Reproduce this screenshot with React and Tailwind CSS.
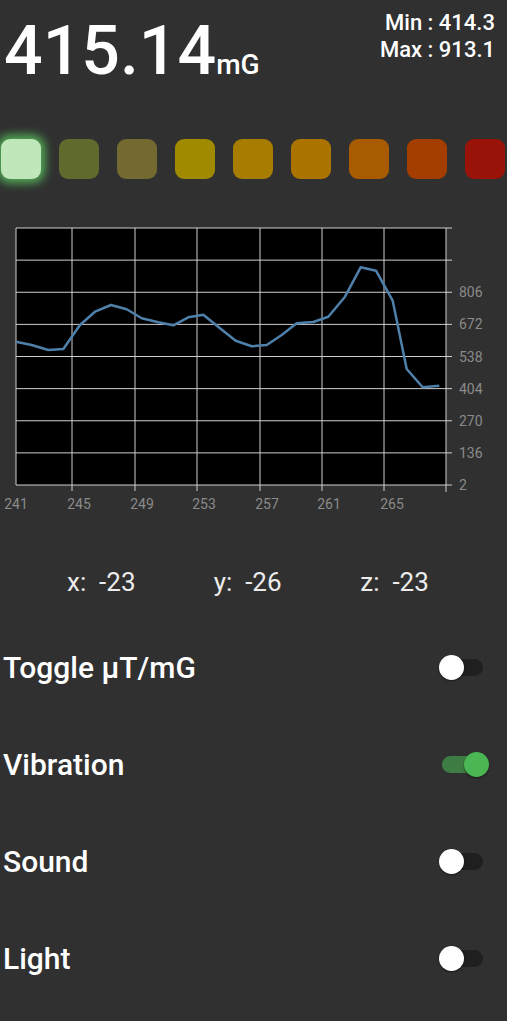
import { useState } from "react";

const levels = [
  { color: "bg-[#bfe7ba]", glow: true },
  { color: "bg-[#5f6a2c]" },
  { color: "bg-[#726a31]" },
  { color: "bg-[#a08a00]" },
  { color: "bg-[#a67d00]" },
  { color: "bg-[#ab7400]" },
  { color: "bg-[#a85b00]" },
  { color: "bg-[#a33d00]" },
  { color: "bg-[#9a1309]" },
];

// chart area: x 16..446, y 8..265 inside the svg
const TOP = 8;
const ROW = 32.125;
const hLines = Array.from({ length: 9 }, (_, i) => TOP + i * ROW);
const vLines = [72, 135, 197, 260, 322, 384];
const yLabels = ["806", "672", "538", "404", "270", "136", "2"];
const xLabels = [
  ["241", 16],
  ["245", 79],
  ["249", 142],
  ["253", 204],
  ["257", 267],
  ["261", 329],
  ["265", 392],
];

const points = [
  [16, 121.7], [31.7, 125], [48.3, 130], [63.3, 129], [80, 105], [95, 91.7],
  [111, 85], [126.7, 89.3], [141.7, 98.3], [158.3, 102.3], [173.3, 105.3],
  [188.3, 97.3], [203.3, 94.7], [220, 108.3], [235.7, 120.7], [251.7, 126.3],
  [266.7, 125], [281.7, 115], [296.7, 103.3], [313.3, 102], [328.3, 96.7],
  [345, 76.7], [360.7, 47.3], [376, 50.7], [392.7, 80.7], [406.7, 149],
  [422.7, 167.3], [439.3, 165.7],
];

function Chart() {
  return (
    <svg width="507" height="300" viewBox="0 0 507 300" className="block">
      <rect x="16" y={TOP} width="430" height={8 * ROW} fill="#000" />
      {hLines.map((y) => (
        <line key={y} x1="16" x2="452" y1={y} y2={y} stroke="#cfcfcf" strokeWidth="1" />
      ))}
      {vLines.map((x) => (
        <line key={x} x1={x} x2={x} y1={TOP} y2={TOP + 8 * ROW + 6} stroke="#cfcfcf" strokeWidth="1" />
      ))}
      <line x1="16" x2="16" y1={TOP} y2={TOP + 8 * ROW} stroke="#cfcfcf" strokeWidth="1" />
      <line x1="446" x2="446" y1={TOP} y2={TOP + 8 * ROW + 7} stroke="#cfcfcf" strokeWidth="1" />
      {yLabels.map((t, i) => (
        <text key={t} x="459" y={hLines[i + 2] + 5} fontSize="14" fill="#8a8a8a" fontFamily="Roboto, sans-serif">
          {t}
        </text>
      ))}
      {xLabels.map(([t, x]) => (
        <text key={t} x={x} y="289" fontSize="14" fill="#8a8a8a" textAnchor="middle" fontFamily="Roboto, sans-serif">
          {t}
        </text>
      ))}
      <polyline
        points={points.map((p) => p.join(",")).join(" ")}
        fill="none"
        stroke="#4f80aa"
        strokeWidth="2.5"
        strokeLinejoin="round"
      />
    </svg>
  );
}

function Toggle({ on, onClick }) {
  return (
    <button onClick={onClick} className="relative h-[25px] w-[50px] shrink-0">
      <span
        className={`absolute left-[3px] top-[4px] h-[17px] w-[41px] rounded-full ${
          on ? "bg-[#3d7d43]" : "bg-[#1f1f1f]"
        }`}
      />
      <span
        className={`absolute top-0 h-[25px] w-[25px] rounded-full shadow-[0_1px_2px_rgba(0,0,0,0.5)] ${
          on ? "right-0 bg-[#4bb654]" : "left-0 bg-white"
        }`}
      />
    </button>
  );
}

export default function App() {
  const [settings, setSettings] = useState({ unit: false, vibration: true, sound: false, light: false });
  const rows = [
    ["unit", "Toggle µT/mG"],
    ["vibration", "Vibration"],
    ["sound", "Sound"],
    ["light", "Light"],
  ];

  return (
    <div className="min-h-screen w-[507px] overflow-hidden bg-[#303030] font-['Roboto',sans-serif] text-white">
      <header className="flex items-start justify-between">
        <div className="flex items-baseline pl-[4px] pt-[17px]">
          <span className="text-[68px] font-medium leading-[68px]">415.14</span>
          <span className="text-[28px] font-medium leading-none">mG</span>
        </div>
        <div className="pr-[12px] pt-[9px] text-right text-[22px] font-medium leading-[27px]">
          <div>Min : 414.3</div>
          <div>Max : 913.1</div>
        </div>
      </header>

      <div className="mt-[54px] flex gap-[18px] pl-[1px]">
        {levels.map((l, i) => (
          <div
            key={i}
            className={`h-[40px] w-[40px] shrink-0 rounded-[9px] ${l.color} ${
              l.glow ? "shadow-[0_0_10px_4px_rgba(90,200,95,0.85)]" : ""
            }`}
          />
        ))}
      </div>

      <div className="mt-[41px]">
        <Chart />
      </div>

      <div className="mt-[47px] flex pl-[67px] text-[26px] leading-[30px] text-[#ececec]">
        <span className="w-[148px] whitespace-pre">x:  -23</span>
        <span className="w-[148px] whitespace-pre">y:  -26</span>
        <span className="w-[148px] whitespace-pre">z:  -23</span>
      </div>

      <div className="mt-[22px]">
        <div className="flex flex-col">
          {rows.map(([key, label]) => (
            <div key={key} className="flex h-[97px] items-center justify-between pl-[3px] pr-[18px]">
              <span className="text-[30px] font-medium leading-none">{label}</span>
              <Toggle on={settings[key]} onClick={() => setSettings((s) => ({ ...s, [key]: !s[key] }))} />
            </div>
          ))}
        </div>
      </div>
    </div>
  );
}
